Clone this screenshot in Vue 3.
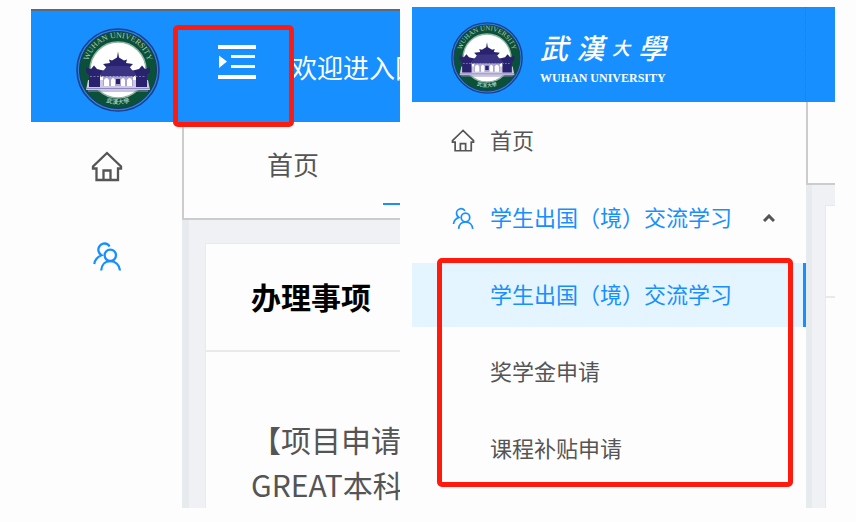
<template>
  <div class="page">

    <!-- shared symbols -->
    <svg class="defs" aria-hidden="true">
      <symbol id="ic-home" viewBox="0 0 32 32">
        <path d="M16 2 L2 15.5 V17.5 H5.5 V29 H27 V17.5 H30 V15.5 Z M12.5 29 V19.5 H19.5 V29" />
      </symbol>
      <symbol id="ic-users" viewBox="0 0 32 32">
        <circle cx="19.3" cy="15.3" r="5.7" />
        <path d="M10.2 30.5 C10.5 25 14 21.2 19.3 21.2 C24.5 21.2 28.5 25 29 30.5" />
        <path d="M18.6 6.5 C17 3.8 14.5 3.2 12.2 3.7 C8.6 4.6 6.8 8 7.5 11 C7.8 12.8 8.8 14 10.5 15.2 C6 17 3.8 19.8 3.3 24" />
      </symbol>
      <symbol id="ic-emblem" viewBox="0 0 84 84">
        <circle cx="42" cy="42" r="41" fill="#2f83d8" stroke="#1d3f8f" stroke-width="1.6" />
        <circle cx="42" cy="42" r="38.6" fill="#0b5038" stroke="#143a6c" stroke-width="1" />
        <circle cx="42" cy="42" r="28" fill="#fff" stroke="#8fb5a4" stroke-width="1.6" />
        <path id="arc-top" d="M12.5 48 A30.5 30.5 0 1 1 71.5 48" fill="none" />
        <text class="emblem__latin" fill="#a9c8bb">
          <textPath href="#arc-top" startOffset="50%" text-anchor="middle">WUHAN UNIVERSITY</textPath>
        </text>
        <path id="arc-bottom" d="M17 66 A36 36 0 0 0 67 66" fill="none" />
        <text class="emblem__cn" fill="#d5e5dd">
          <textPath href="#arc-bottom" startOffset="50%" text-anchor="middle">武漢大學</textPath>
        </text>
        <path d="M12 52 H72 L74 62 H10 Z" fill="#cdc9e4" />
        <path d="M27 45 H57 V58 H27 Z" fill="#aaa5d0" />
        <path d="M42 23.5 L43 29.5 L48 32.5 L51 31.5 L50 35 L57 36 L54 39 H30 L27 36 L34 35 L33 31.5 L36 32.5 L41 29.5 Z" fill="#29236f" />
        <path d="M31 38 H53 L56 42 L63 45 L59 48 H25 L21 45 L28 42 Z" fill="#3a3483" />
        <path d="M10 39.5 L15 41 L18 37.5 L21 41 L27 42.5 L24 46 V59 H13 V47 L10 44 Z" fill="#29236f" />
        <path d="M74 39.5 L69 41 L66 37.5 L63 41 L57 42.5 L60 46 V59 H71 V47 L74 44 Z" fill="#29236f" />
        <path d="M28 58 V52 Q30.5 48 33 52 V58 Z M35 58 V52 Q37 48 39 52 V58 Z M45 58 V52 Q47 48 49 52 V58 Z M51 58 V52 Q53.5 48 56 52 V58 Z" fill="#fff" />
        <path d="M40 51 H44 V56 H40 Z" fill="#29236f" />
        <path d="M14 48.5 H70" stroke="#7770af" stroke-width="1.2" stroke-dasharray="2 1.5" />
        <path d="M10 60.5 H74 M12 63 H72" stroke="#8d87bd" stroke-width="1" />
      </symbol>
    </svg>

    <!-- collapsed layout -->
    <section class="panel panel--collapsed">
      <header class="bar">
        <div class="bar__logo">
          <svg class="emblem" role="img" aria-label="武汉大学"><use href="#ic-emblem" /></svg>
        </div>
        <button class="toggle" type="button" aria-label="展开菜单">
          <svg class="toggle__icon" viewBox="0 0 38 35">
            <path d="M0 1 H38 V5 H0 Z M13 11 H37 V14 H13 Z M13 21 H37 V24 H13 Z M0 31 H38 V35 H0 Z M1 11.5 L9 17.5 L1 24 Z" />
          </svg>
        </button>
        <p class="bar__welcome">欢迎进入国</p>
      </header>

      <div class="panel__body">
        <nav class="rail">
          <a v-for="item in rail" :key="item.icon" class="rail__item" :class="{ 'rail__item--active': item.active }" href="#" :aria-label="item.label">
            <svg class="line-icon line-icon--lg"><use :href="'#' + item.icon" /></svg>
          </a>
        </nav>

        <main class="main">
          <div class="tabs">
            <button class="tabs__item" type="button">首页</button>
            <button class="tabs__item tabs__item--active" type="button" aria-label="办理事项"></button>
          </div>
          <div class="main__area">
            <article class="card">
              <h2 class="card__head">办理事项</h2>
              <p class="card__text">【项目申请<br />GREAT本科</p>
            </article>
          </div>
        </main>
      </div>
    </section>

    <!-- expanded layout -->
    <section class="panel panel--expanded">
      <header class="bar">
        <div class="bar__logo">
          <svg class="emblem" role="img" aria-label="武汉大学"><use href="#ic-emblem" /></svg>
          <div class="wordmark">
            <p class="wordmark__cn">
              <span>武</span><span>漢</span><span class="wordmark__small">大</span><span>學</span>
            </p>
            <p class="wordmark__en">WUHAN UNIVERSITY</p>
          </div>
        </div>
      </header>

      <div class="panel__body">
        <nav class="menu">
          <a class="menu__item" href="#">
            <svg class="line-icon"><use href="#ic-home" /></svg>
            <span class="menu__label">首页</span>
          </a>
          <button class="menu__item menu__item--open" type="button" :aria-expanded="open" @click="open = !open">
            <svg class="line-icon"><use href="#ic-users" /></svg>
            <span class="menu__label">学生出国（境）交流学习</span>
            <svg class="menu__arrow" :class="{ 'menu__arrow--down': !open }" viewBox="0 0 12 8">
              <path d="M1 7 L6 2 L11 7" />
            </svg>
          </button>
          <ul v-if="open" class="submenu">
            <li v-for="(label, i) in submenu" :key="label">
              <a class="submenu__item" :class="{ 'submenu__item--active': selected === i }" href="#" @click.prevent="selected = i">
                <span class="menu__label">{{ label }}</span>
              </a>
            </li>
          </ul>
        </nav>

        <main class="main">
          <div class="tabs"></div>
          <div class="main__area">
            <article class="card">
              <div class="card__head"></div>
            </article>
          </div>
        </main>
      </div>
    </section>

  </div>
</template>

<script setup>
import { ref } from 'vue'

const open     = ref(true)
const selected = ref(0)

const rail = [
  { icon: 'ic-home',  label: '首页', active: false },
  { icon: 'ic-users', label: '学生出国（境）交流学习', active: true },
]
const submenu = ['学生出国（境）交流学习', '奖学金申请', '课程补贴申请']
</script>

<style>
body {
  margin: 0;
  background: #fdfdfd;
}
</style>

<style scoped>
.page {
  box-sizing: border-box;
  min-height: 100vh;
  padding: 7px 21px 14px 31px;
  display: grid;
  grid-template-columns: minmax(0, 369fr) minmax(0, 423fr);
  column-gap: 12px;
  font-family: 'Noto Sans CJK SC', sans-serif;
  color: #555;
}
.page * { box-sizing: border-box; }
.defs {
  position: absolute;
  width: 0;
  height: 0;
}
button {
  font: inherit;
  color: inherit;
  background: none;
  border: 0;
  padding: 0;
  cursor: pointer;
}
a { color: inherit; text-decoration: none; }
p, h2, ul { margin: 0; padding: 0; }
ul { list-style: none; }

/* panels */
.panel {
  display: flex;
  flex-direction: column;
  overflow: hidden;
}
.panel--collapsed { margin-top: 2px; }
.panel__body {
  flex: 1;
  display: flex;
}

/* header */
.bar {
  display: flex;
  background: #188fff;
  color: #fff;
}
.panel--collapsed .bar {
  height: 113px;
  border-top: 2px solid #586b7e;
}
.panel--expanded .bar { height: 95px; }
.bar__logo {
  flex: none;
  display: flex;
  align-items: center;
  gap: 17px;
  padding-top: 7px;
}
.panel--collapsed .bar__logo {
  width: 151px;
  padding-left: 45px;
}
.panel--expanded .bar__logo {
  width: 394px;
  padding-left: 39px;
  border-right: 1px dotted #1680e4;
}
.bar__welcome {
  flex: 1;
  align-self: center;
  overflow: hidden;
  white-space: nowrap;
  font-size: 26px;
  line-height: 36px;
}

.emblem {
  width: 72px;
  height: 72px;
}
.panel--collapsed .emblem {
  width: 84px;
  height: 84px;
}
.emblem__latin {
  font: 8px 'Liberation Serif', serif;
}
.emblem__cn {
  font: 6px 'Noto Sans CJK TC', sans-serif;
}

.wordmark { width: 126px; }
.wordmark__cn {
  display: flex;
  align-items: center;
  justify-content: space-between;
  font-family: 'Noto Sans CJK TC', sans-serif;
  font-size: 28px;
  font-style: italic;
  font-weight: 500;
  line-height: 34px;
}
.wordmark__small { font-size: 18px; }
.wordmark__en {
  margin-top: 6px;
  font: bold 12px/16px 'Liberation Serif', serif;
  white-space: nowrap;
}

/* menu toggle, framed in red */
.toggle {
  position: relative;
  flex: none;
  width: 109px;
  display: flex;
  justify-content: center;
  padding-top: 33px;
}
.toggle::after {
  content: '';
  position: absolute;
  inset: 14px -3px -5px -9px;
  border: 5px solid #ff1a0d;
  border-radius: 5px;
  z-index: 1;
}
.toggle__icon {
  width: 38px;
  height: 35px;
  fill: #fff;
}

/* icons */
.line-icon {
  flex: none;
  width: 24px;
  height: 24px;
  fill: none;
  stroke: currentColor;
  stroke-width: 2.3;
}
.line-icon--lg {
  width: 32px;
  height: 32px;
}

/* collapsed rail */
.rail {
  flex: none;
  width: 151px;
}
.rail__item {
  display: flex;
  align-items: center;
  justify-content: center;
  height: 89px;
}
.rail__item--active { color: #188fff; }

/* content side */
.main {
  flex: 1;
  min-width: 0;
  display: flex;
  flex-direction: column;
}
.tabs {
  display: flex;
  align-items: flex-start;
  overflow: hidden;
  border: solid #ccc;
  border-width: 0 0 2px 2px;
}
.panel--collapsed .tabs { height: 98px; }
.panel--expanded .tabs { height: 83px; }
.tabs__item {
  flex: none;
  height: 83px;
  padding: 0 64px 0 83px;
  font-size: 26px;
}
.tabs__item--active { border-bottom: 2px solid #188fff; }
.main__area {
  flex: 1;
  display: flex;
  padding: 23px 0 0 16px;
  background: #eff1f5;
  border-left: 7px solid #e8ebee;
}
.panel--expanded .main__area {
  padding: 20px 0 0 13px;
  border-left-width: 6px;
}

.card {
  flex: 1;
  min-width: 0;
  overflow: hidden;
  background: #fdfdfd;
  border: solid #e8eaed;
  border-width: 1px 0 0 1px;
}
.card__head {
  height: 108px;
  padding: 0 45px;
  border-bottom: 2px solid #e8eaea;
  font-size: 30px;
  font-weight: 700;
  line-height: 104px;
  white-space: nowrap;
  color: #000;
}
.panel--expanded .card__head { height: 92px; }
.card__text {
  padding: 65px 0 0 45px;
  font-size: 30px;
  line-height: 45px;
  white-space: nowrap;
}

/* expanded menu */
.menu {
  flex: none;
  width: 394px;
  padding-top: 7px;
  font-size: 22px;
}
.menu__item {
  display: flex;
  align-items: center;
  gap: 15px;
  width: 100%;
  height: 64px;
  margin-bottom: 13px;
  padding: 0 31px 0 39px;
  white-space: nowrap;
}
.menu__item--open { color: #188fff; }
.menu__label { padding-bottom: 4px; }
.menu__arrow {
  width: 12px;
  height: 8px;
  margin-left: auto;
  fill: none;
  stroke: #555;
  stroke-width: 3;
}
.menu__arrow--down { transform: rotate(180deg); }

.submenu {
  position: relative;
  display: flex;
  flex-direction: column;
  gap: 13px;
}
.submenu::after {
  content: '';
  position: absolute;
  inset: -5px 13px -6px 25px;
  border: 5px solid #ff1a0d;
  border-radius: 5px;
  pointer-events: none;
}
.submenu__item {
  display: flex;
  align-items: center;
  height: 64px;
  padding-left: 78px;
}
.submenu__item--active {
  color: #188fff;
  background: #e4f5ff;
  border-right: 3px solid #188fff;
}
</style>
